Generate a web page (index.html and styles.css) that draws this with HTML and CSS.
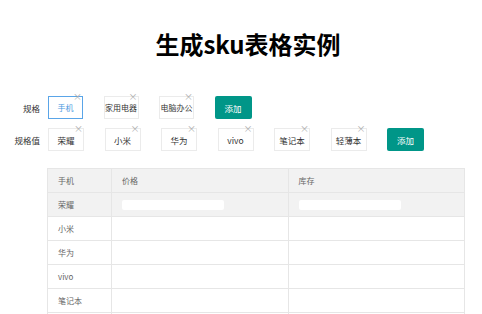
FILE: index.html
```html
<!DOCTYPE html>
<html lang="zh-CN">
  <head>
    <meta charset="UTF-8" />
    <meta name="viewport" content="width=device-width, initial-scale=1.0" />
    <title>生成sku表格实例</title>
    <link rel="stylesheet" href="styles.css">
  </head>
  <body>
    <h1>生成sku表格实例</h1>

    <div class="spec-row">
      <div class="spec-label">规格</div>
      <div class="tags narrow">
        <span class="tag active">手机<i class="close">×</i></span>
        <span class="tag">家用电器<i class="close">×</i></span>
        <span class="tag">电脑办公<i class="close">×</i></span>
        <button class="add-btn">添加</button>
      </div>
    </div>

    <div class="spec-row">
      <div class="spec-label">规格值</div>
      <div class="tags">
        <span class="tag">荣耀<i class="close">×</i></span>
        <span class="tag">小米<i class="close">×</i></span>
        <span class="tag">华为<i class="close">×</i></span>
        <span class="tag">vivo<i class="close">×</i></span>
        <span class="tag">笔记本<i class="close">×</i></span>
        <span class="tag">轻薄本<i class="close">×</i></span>
        <button class="add-btn">添加</button>
      </div>
    </div>

    <table class="sku-table">
      <colgroup>
        <col class="col-name" />
        <col />
        <col />
      </colgroup>
      <thead>
        <tr>
          <th>手机</th>
          <th>价格</th>
          <th>库存</th>
        </tr>
      </thead>
      <tbody>
        <tr class="hover">
          <td>荣耀</td>
          <td><input class="cell-input" type="text" /></td>
          <td><input class="cell-input" type="text" /></td>
        </tr>
        <tr><td>小米</td><td></td><td></td></tr>
        <tr><td>华为</td><td></td><td></td></tr>
        <tr><td>vivo</td><td></td><td></td></tr>
        <tr><td>笔记本</td><td></td><td></td></tr>
        <tr><td></td><td></td><td></td></tr>
      </tbody>
    </table>
  </body>
</html>
```

FILE: styles.css
```css
html,
body {
  overflow: hidden;
}

body {
  margin: 0;
  font-family: "Noto Sans CJK SC", "Liberation Sans", sans-serif;
  color: #333;
}

h1 {
  margin: 0;
  padding-top: 29px;
  padding-left: 14px;
  height: 30px;
  line-height: 30px;
  text-align: center;
  font-size: 24px;
  font-weight: bold;
  color: #000;
  margin-bottom: 37px;
}

.spec-row {
  display: flex;
  align-items: center;
  height: 23px;
  margin-bottom: 9px;
}

.spec-label {
  width: 48px;
  padding-right: 8px;
  box-sizing: border-box;
  text-align: right;
  font-size: 8.5px;
  color: #333;
}

.tags {
  display: flex;
  gap: 20.5px;
}

.tag {
  position: relative;
  width: 36px;
  height: 23px;
  box-sizing: border-box;
  border: 1px solid #ebebeb;
  display: flex;
  align-items: center;
  justify-content: center;
  white-space: nowrap;
  font-size: 8.5px;
  color: #333;
  background: #fff;
}

.narrow .tag {
  width: 35px;
  font-size: 8px;
}

.tag.active {
  border-color: #5aa5e8;
  color: #4a9ae0;
}

.close {
  position: absolute;
  top: -5px;
  right: 0;
  font-style: normal;
  font-size: 9px;
  line-height: 9px;
  color: #aaa;
}

.add-btn {
  width: 37px;
  height: 23px;
  border: none;
  border-radius: 2px;
  background: #009688;
  color: #fff;
  font-family: inherit;
  font-size: 8.5px;
  padding: 0;
}

.sku-table {
  margin-top: 17px;
  margin-left: 47px;
  width: 418px;
  border-collapse: collapse;
  table-layout: fixed;
  font-size: 8px;
  color: #666;
}

.col-name {
  width: 64px;
}

.sku-table th,
.sku-table td {
  height: 23px;
  padding: 0 10px;
  border: 1px solid #e6e6e6;
  text-align: left;
  font-weight: normal;
}

.sku-table thead th,
.sku-table tr.hover td {
  background: #f2f2f2;
}

.cell-input {
  display: block;
  width: 102px;
  height: 10px;
  border: none;
  border-radius: 2px;
  padding: 0;
  background: #fff;
}
```
